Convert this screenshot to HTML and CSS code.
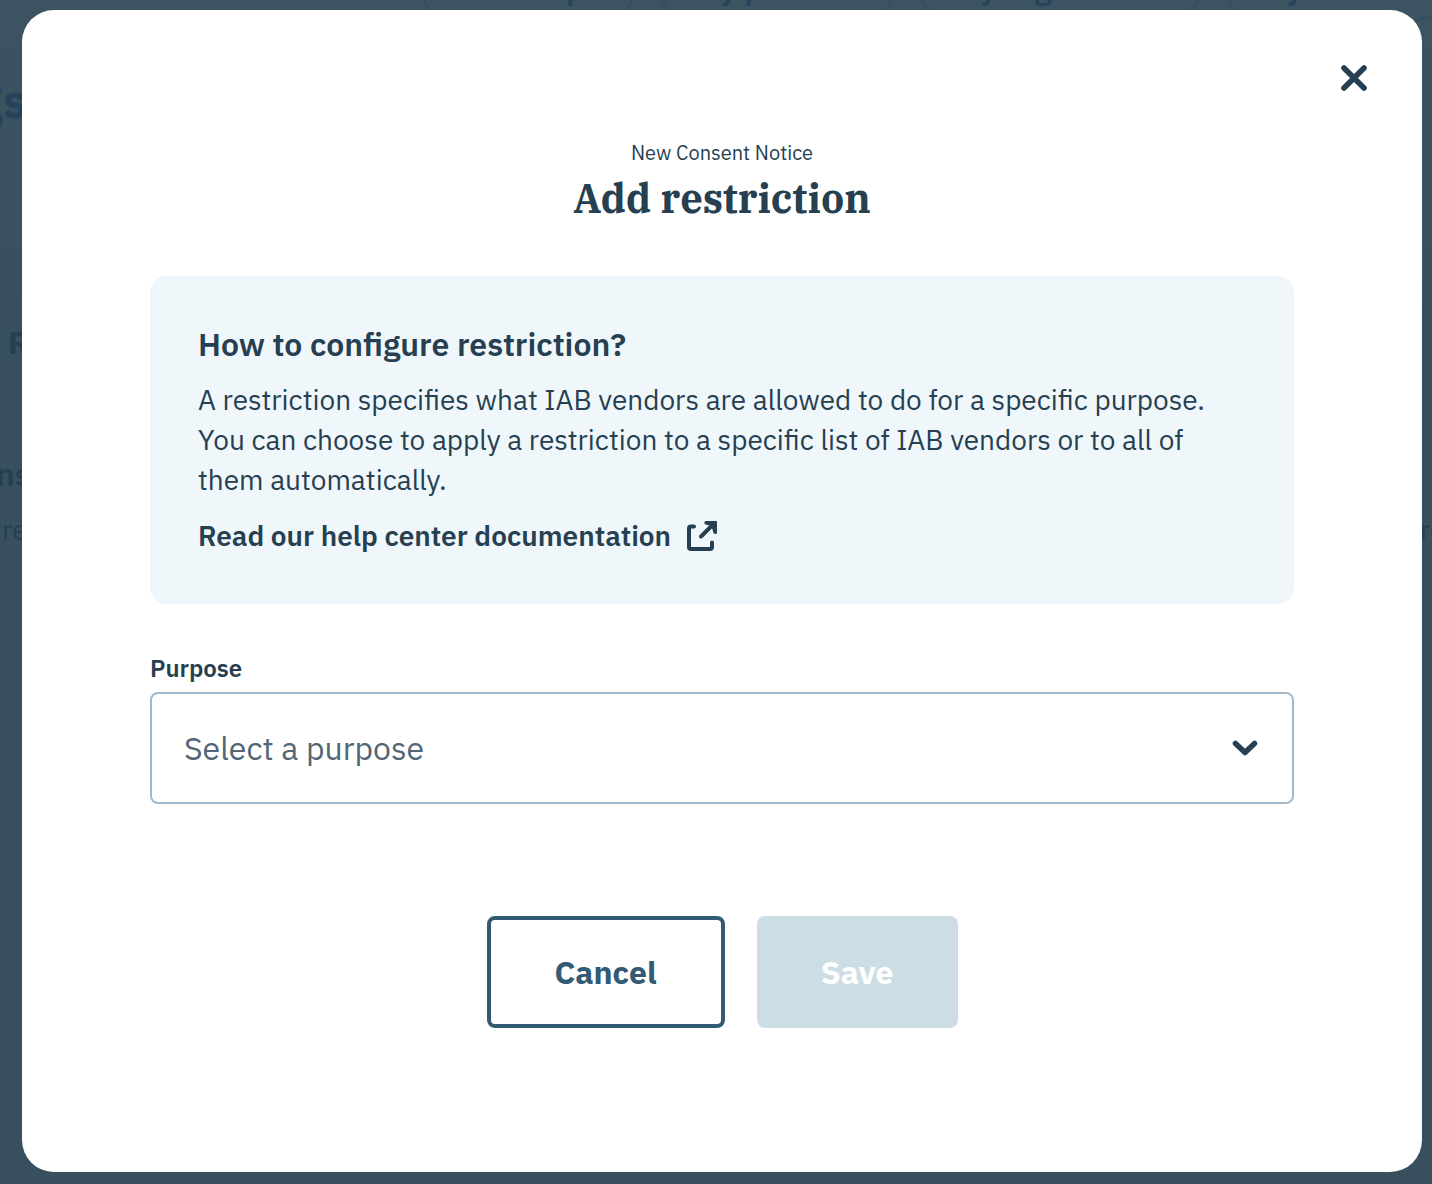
FILE: index.html
```html
<!DOCTYPE html>
<html lang="en">
<head>
    <meta charset="utf-8">
    <title>Add restriction</title>
    <link rel="stylesheet" href="styles.css">
</head>
<body>
    <!-- page behind the dialog -->
    <div class="backdrop" aria-hidden="true">
        <span class="tab tab-1">p</span>
        <span class="tab tab-2">y p</span>
        <span class="tab tab-3">y org</span>
        <span class="tab tab-4">y</span>
        <span class="page-title">gs</span>
        <span class="row-title">R</span>
        <span class="card-title">ns</span>
        <span class="card-text">re</span>
        <span class="card-text card-text-right">re</span>
    </div>

    <div class="modal" role="dialog" aria-labelledby="modal-title">
        <div class="modal-top">
            <button type="button" class="close" aria-label="Close">
                <svg width="40" height="40" viewBox="0 0 40 40">
                    <path d="M10 10L30 30M30 10L10 30" fill="none" stroke="currentColor" stroke-width="5.6" stroke-linecap="round"/>
                </svg>
            </button>
        </div>

        <div class="content">
            <div class="header">
                <p class="subtitle">New Consent Notice</p>
                <h1 id="modal-title">Add restriction</h1>
            </div>

            <div class="info">
                <h2>How to configure restriction?</h2>
                <p>A restriction specifies what IAB vendors are allowed to do for a specific purpose. You can choose to apply a restriction to a specific list of IAB vendors or to all of them automatically.</p>
                <a href="#" class="help-link">
                    Read our help center documentation
                    <svg width="32" height="32" viewBox="0 0 32 32">
                        <path d="M7 6.500H4Q2 6.500 2 8.500V27Q2 29 4 29H23Q25 29 25 27V22.500" fill="none" stroke="currentColor" stroke-width="4" stroke-linecap="round" stroke-linejoin="round"/>
                        <path d="M14 16.500L26 4.500" fill="none" stroke="currentColor" stroke-width="4" stroke-linecap="round"/>
                        <path d="M19 1H29Q30 1 30 2V12.500Q30 14 28.500 14Q27 14 26.500 13L25 8L22.500 5.500L18.500 4.500Q17.300 4 17.300 2.700Q17.300 1 19 1Z" fill="currentColor"/>
                    </svg>
                </a>
            </div>

            <form>
                <div class="form-group">
                    <label for="purpose">Purpose</label>
                    <div class="select">
                        <select id="purpose">
                            <option>Select a purpose</option>
                        </select>
                        <svg width="32" height="32" viewBox="0 0 32 32">
                            <path d="M6.500 11.500L16 20.500L25.500 11.500" fill="none" stroke="currentColor" stroke-width="5.500" stroke-linecap="round" stroke-linejoin="round"/>
                        </svg>
                    </div>
                </div>
                <div class="buttons">
                    <button type="button" class="btn btn-cancel">Cancel</button>
                    <button type="submit" class="btn btn-save" disabled>Save</button>
                </div>
            </form>
        </div>
    </div>
</body>
</html>
```

FILE: styles.css
```css
* {
    box-sizing: border-box;
}
body {
    margin: 0;
    padding: 10px 10px 12px 22px;
    min-height: 100vh;
    display: flex;
    background: linear-gradient(#3c5362, #384f5d 30%, #384f5d);
    color: #263f51;
    font-family: "IBM Plex Sans", Roboto, sans-serif;
}
h1, h2, p {
    margin: 0;
}

/* backdrop */
.backdrop {
    position: fixed;
    inset: 0;
    overflow: hidden;
    color: #263f51;
}
.backdrop span {
    position: absolute;
    white-space: pre;
}
.tab {
    top: -50px;
    height: 72px;
    padding: 16px 60px;
    border: 2px solid #384f60;
    border-radius: 36px;
    color: #25435b;
    font-size: 32px;
    line-height: 40px;
    font-weight: 600;
}
.tab-1 {
    left: 420px;
    width: 216px;
    padding-left: 144px;
}
.tab-2 {
    left: 658px;
    width: 238px;
}
.tab-3 {
    left: 918px;
    width: 284px;
}
.tab-4 {
    left: 1224px;
    width: 224px;
}
.page-title {
    top: 70px;
    right: calc(100% - 27px);
    color: #25435b;
    font-size: 48px;
    line-height: 60px;
    font-weight: 700;
}
.row-title {
    top: 322px;
    left: 8px;
    font-size: 32px;
    line-height: 40px;
    font-weight: 700;
}
.card-title {
    top: 454px;
    left: -4px;
    font-size: 32px;
    line-height: 40px;
    font-weight: 600;
}
.card-text {
    top: 510px;
    left: 2px;
    font-size: 28px;
    line-height: 40px;
}
.card-text-right {
    left: calc(100% - 12px);
}

/* dialog */
.modal {
    position: relative;
    flex: 1;
    padding: 48px 48px 144px;
    background: #fff;
    border-radius: 32px;
}
.modal-top {
    display: flex;
    justify-content: flex-end;
}
.close {
    width: 40px;
    height: 40px;
    padding: 0;
    border: none;
    background: none;
    color: inherit;
    cursor: pointer;
}
.close svg {
    display: block;
}
.content {
    padding: 43px 80px 0;
}
.header {
    margin-bottom: 54px;
    text-align: center;
}
.subtitle {
    margin-bottom: 9px;
    font-size: 20px;
    line-height: 24px;
}
h1 {
    font-family: "IBM Plex Serif", "DejaVu Serif Condensed", "DejaVu Serif", serif;
    font-size: 40px;
    line-height: 48px;
    font-weight: 700;
}

.info {
    display: flex;
    flex-direction: column;
    gap: 16px;
    margin-bottom: 48px;
    padding: 48px;
    background: #eff7fb;
    border-radius: 16px;
    font-size: 28px;
    line-height: 40px;
}
.info h2 {
    font-size: 32px;
    font-weight: 600;
}
.help-link {
    display: flex;
    align-items: center;
    gap: 16px;
    color: inherit;
    font-weight: 600;
    text-decoration: none;
}

label {
    display: block;
    margin-bottom: 8px;
    font-size: 24px;
    line-height: 32px;
    font-weight: 600;
}
.select {
    position: relative;
}
.select select {
    appearance: none;
    display: block;
    width: 100%;
    height: 112px;
    padding: 0 32px;
    border: 2px solid #a3b9c9;
    border-radius: 8px;
    background: #fff;
    color: #526676;
    font-family: inherit;
    font-size: 32px;
}
.select svg {
    position: absolute;
    top: 40px;
    right: 33px;
    pointer-events: none;
}

.buttons {
    display: flex;
    justify-content: center;
    gap: 32px;
    margin-top: 112px;
}
.btn {
    height: 112px;
    padding: 0 64px;
    border: none;
    border-radius: 8px;
    font-family: inherit;
    font-size: 32px;
    font-weight: 700;
    cursor: pointer;
}
.btn-cancel {
    border: 4px solid #335a74;
    background: #fff;
    color: #335a74;
}
.btn-save {
    background: #cddde5;
    color: #fff;
}
```
